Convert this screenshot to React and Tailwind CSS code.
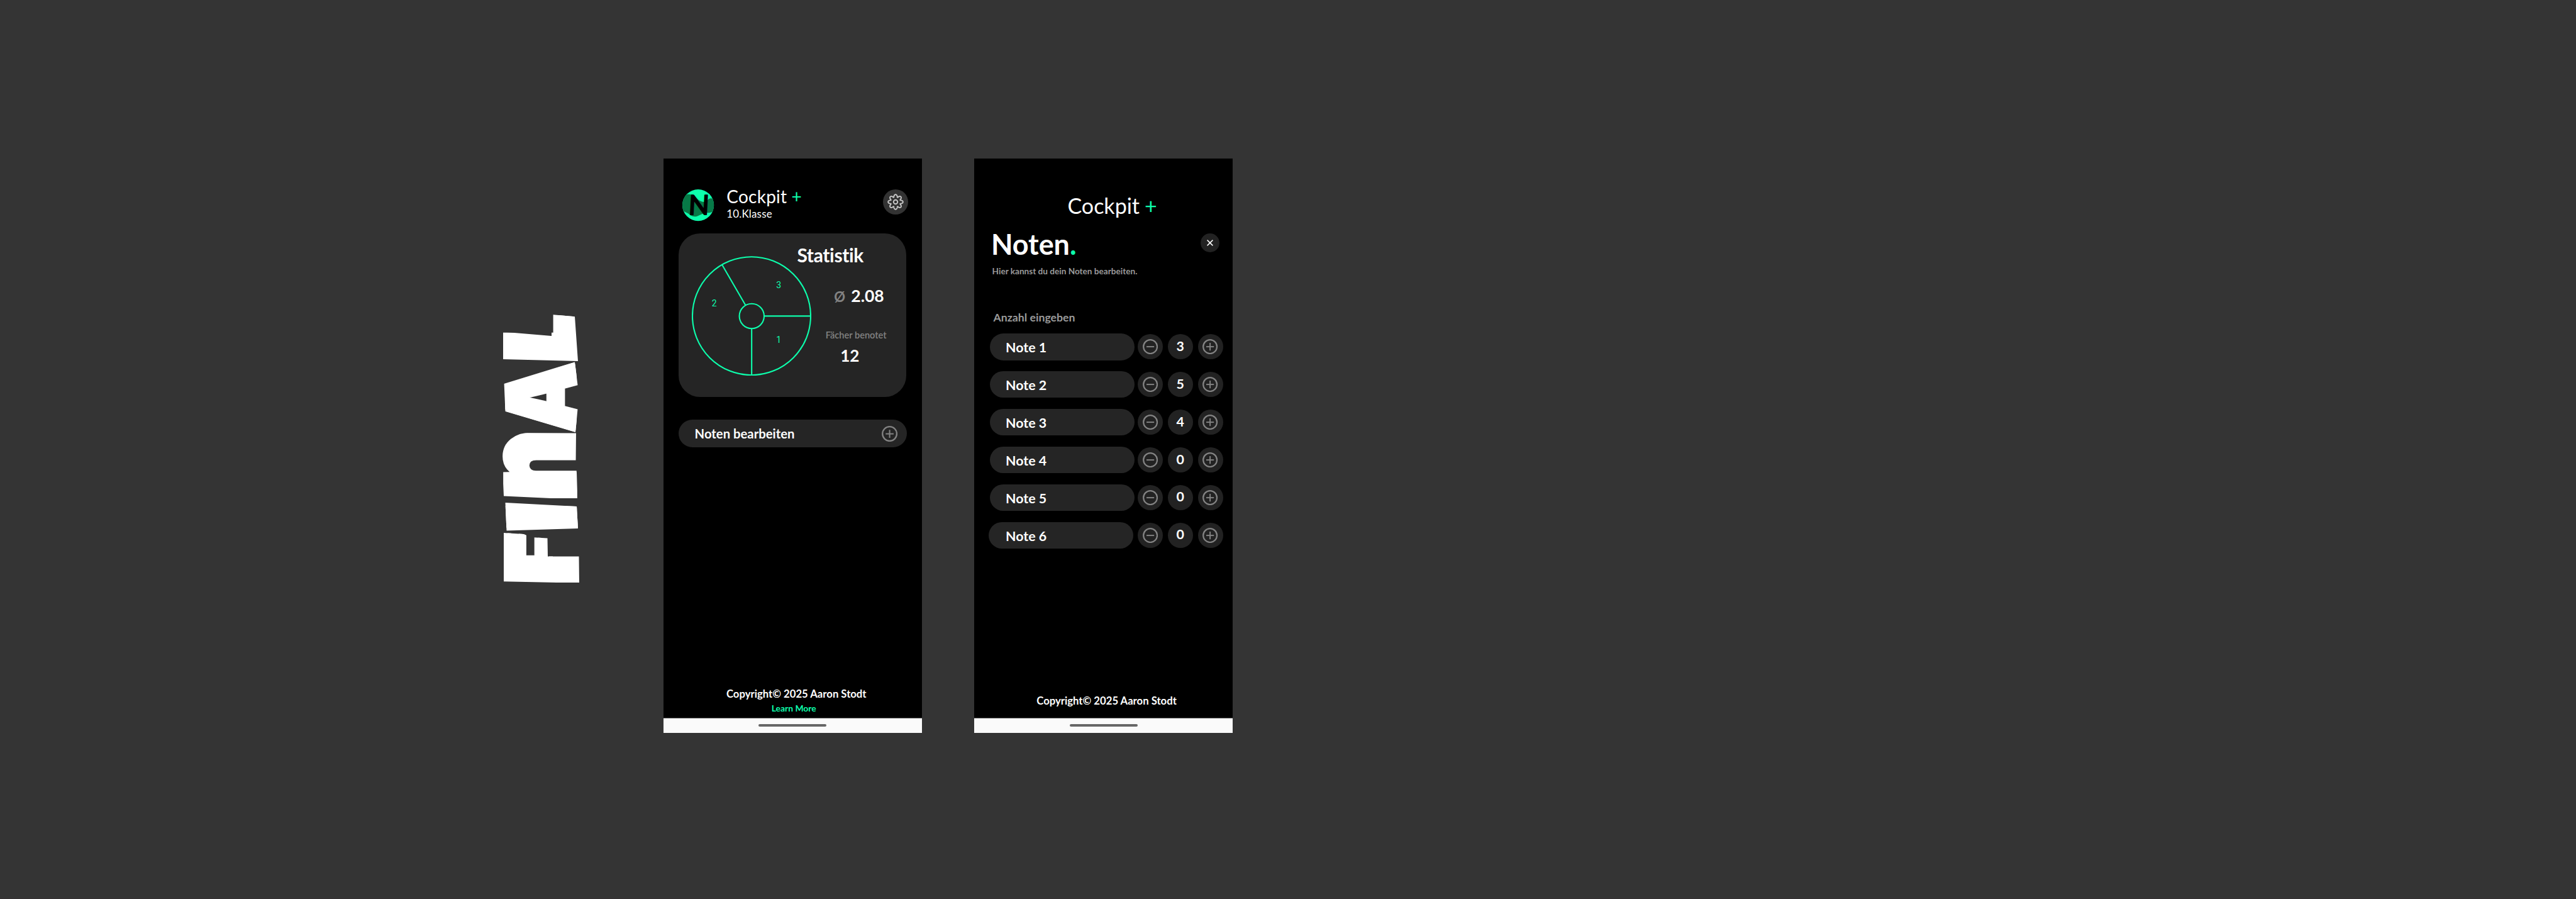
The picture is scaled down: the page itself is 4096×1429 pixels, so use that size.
import React from "react";

const GREEN = "#0dffac";

const GEAR_PATH =
  Array.from({ length: 192 }, (_, i) => {
    const t = (i / 192) * Math.PI * 2;
    const r = 51.5 + 10.5 * Math.cos(8 * t);
    const a = t + 0.055 * Math.sin(8 * t);
    return `${i ? "L" : "M"}${(137 + r * Math.cos(a)).toFixed(2)} ${(131 + r * Math.sin(a)).toFixed(2)}`;
  }).join("") + "Z";

function FinalLabel() {
  const glyph = "absolute left-0 top-0 block origin-top-left text-[100px] leading-none font-black";
  return (
    <div className="mt-[498.7px] flex h-[428px] w-[122px] shrink-0 items-center justify-center font-['Inter',sans-serif] text-white">
      <div className="flex h-[122px] w-[428px] shrink-0 -rotate-90">
        <div className="relative h-[122px] w-[80px] shrink-0 [clip-path:polygon(2.8px_1.5px,80px_1.5px,78px_34px,73px_45px,71.6px_71.5px,42.6px_72px,42.6px_121.5px,0.3px_122px)]">
          <span className={glyph + " [-webkit-text-stroke:8px_white] [transform:matrix(1.56,0,0,1.5,0,-12.5)]"}>F</span>
        </div>
        <div className="relative ml-[3px] h-[122px] w-[45px] shrink-0 [clip-path:polygon(0.6px_6.5px,45px_4.5px,39px_118px,4px_120px)]">
          <span className={glyph + " [-webkit-text-stroke:8px_white] [transform:matrix(1.75,0,0,1.6,-3,-18)]"}>I</span>
        </div>
        <div className="relative ml-[5px] h-[122px] w-[106px] shrink-0 [clip-path:polygon(5.6px_2px,45px_0px,106px_0px,105.5px_117px,57px_116.5px,42.5px_118px,0px_119.5px)]">
          <span className={glyph + " [-webkit-text-stroke:6px_white] [transform:matrix(1.715,0,0,1.943,-1.5,-54.5)]"}>n</span>
        </div>
        <div className="relative ml-[0.7px] h-[122px] w-[112px] shrink-0 [clip-path:polygon(33.3px_4.5px,79.8px_2.5px,112px_115px,71px_120px,42.3px_120px,0px_116px)]">
          <span className={glyph + " [-webkit-text-stroke:4px_white] [transform:matrix(1.43,0,0,1.57,-1,-17.5)]"}>A</span>
        </div>
        <div className="relative ml-[1.3px] h-[122px] w-[74px] shrink-0 [clip-path:polygon(3px_1px,46.5px_1px,40px_78px,74px_78px,70.7px_115px,0px_120px)]">
          <span className={glyph + " [-webkit-text-stroke:12px_white] [transform:matrix(1.42,0,0,1.43,2,-11)]"}>L</span>
        </div>
      </div>
    </div>
  );
}

function Avatar() {
  return (
    <svg className="h-[50.2px] w-[50.2px] shrink-0 overflow-visible" viewBox="36 25 262 262">
      <defs>
        <clipPath id="avatar-disc">
          <circle cx="167" cy="156" r="131" />
        </clipPath>
      </defs>
      <g clipPath="url(#avatar-disc)">
        <rect x="30" y="20" width="280" height="280" fill={GREEN} />
        <path
          d="M30 82C58 62 92 64 114 68C150 76 162 126 212 129C243 128 250 99 272 99C284 99 296 108 306 118V200C280 215 262 222 236 219C196 222 172 251 137 251C106 250 92 226 70 218C52 212 46 204 30 200Z"
          fill="#077947"
        />
      </g>
      <text
        x="0"
        y="0"
        transform="translate(84 235) skewX(-3)"
        fontFamily="Lato, sans-serif"
        fontSize="224"
        fontWeight="400"
        fill="#000"
        stroke="#000"
        strokeWidth="11"
        strokeLinejoin="round"
      >
        N
      </text>
    </svg>
  );
}

function GearButton() {
  return (
    <div className="mr-[22px] ml-auto h-10 w-10 shrink-0 rounded-full bg-[#333333]">
      <svg className="h-10 w-10" viewBox="32 26 210 210" fill="none" stroke="#c8c8c8" strokeWidth="10">
        <path d={GEAR_PATH} strokeLinejoin="round" />
        <circle cx="137" cy="131" r="17" />
      </svg>
    </div>
  );
}

function RingIcon({ plus, className }) {
  return (
    <svg className={className} viewBox="0 0 25 25" fill="none" stroke="#838383">
      <circle cx="12.5" cy="12.5" r="11.3" strokeWidth="2.3" />
      <path d="M6.2 12.5H18.8" strokeWidth="2" />
      {plus && <path d="M12.5 6.2V18.8" strokeWidth="2" />}
    </svg>
  );
}

function Pie() {
  return (
    <svg
      className="mt-[35.8px] ml-[21px] h-[190.4px] w-[190px] shrink-0 font-['Roboto',sans-serif]"
      viewBox="0 0 190 190.4"
      fill="none"
      stroke={GREEN}
      strokeWidth="2.1"
    >
      <circle cx="95" cy="95.2" r="94" />
      <circle cx="95.3" cy="95.5" r="19.7" />
      <path d="M115 95.4H189M95.2 115V189M47.8 13.2L85.5 78.2" />
      <g fill={GREEN} stroke="none" fontSize="14" textAnchor="middle">
        <text x="138.3" y="51.5">3</text>
        <text x="35.6" y="79.6">2</text>
        <text x="138.3" y="138.2">1</text>
      </g>
    </svg>
  );
}

function HomeBar() {
  return (
    <div className="mt-auto flex h-[24.5px] w-full shrink-0 items-center justify-center border-t border-[#6b6b6b] bg-[#fafafa]">
      <div className="h-1 w-[108px] rounded-full bg-[#666666]" />
    </div>
  );
}

function StatsScreen() {
  return (
    <div className="mt-[252px] ml-[133.7px] flex h-[913px] w-[411px] shrink-0 flex-col bg-black">
      <div className="mt-[49.3px] ml-[30px] flex h-[50px] shrink-0 items-start">
        <Avatar />
        <div className="mt-[-3.7px] ml-[20.1px] whitespace-nowrap">
          <div className="flex text-[28px] leading-none tracking-[0.25px]">
            <span>Cockpit</span>
            <span className="ml-[7px] text-[#0dffac]">+</span>
          </div>
          <div className="mt-[5.6px] text-[17px] leading-none tracking-[0.15px]">10.Klasse</div>
        </div>
        <GearButton />
      </div>

      <div className="mt-[19.7px] ml-6 flex h-[260px] w-[362px] shrink-0 items-start rounded-[34px] bg-[#252525]">
        <Pie />
        <div className="mt-[19.3px] ml-[-22.6px] font-bold whitespace-nowrap">
          <div className="text-[30px] leading-none tracking-[-0.35px] [font-variant-ligatures:none]">Statistik</div>
          <div className="mt-[36.5px] ml-[58.8px] flex items-baseline leading-none">
            <span className="text-[22px] leading-none text-[#828282]">Ø</span>
            <span className="ml-[9.3px] text-[26.5px] leading-none">2.08</span>
          </div>
          <div className="mt-[43.2px] ml-[45.3px] text-[14.6px] leading-none font-semibold text-[#828282]">Fächer benotet</div>
          <div className="mt-[10.7px] ml-[68.8px] text-[26px] leading-none">12</div>
        </div>
      </div>

      <div className="mt-[35.6px] ml-6 flex h-[44.2px] w-[363px] shrink-0 items-center justify-between rounded-full bg-[#252525] pt-px pr-[14.7px] pl-[25.6px]">
        <span className="text-[20.3px] leading-none font-bold">Noten bearbeiten</span>
        <RingIcon plus className="mt-px h-[25.2px] w-[25.2px]" />
      </div>

      <div className="mt-[384.4px] ml-[100px] text-[16.7px] leading-none font-bold whitespace-nowrap">
        Copyright© 2025 Aaron Stodt
      </div>
      <div className="mt-[7.2px] ml-[171.7px] text-[13.9px] leading-none font-bold text-[#0dffac]">Learn More</div>
      <HomeBar />
    </div>
  );
}

const GRADES = [3, 5, 4, 0, 0, 0];

function GradeRow({ grade, count }) {
  const disc = "flex h-10 w-10 shrink-0 items-center justify-center rounded-full bg-[#222222]";
  return (
    <div className="flex h-[42.6px] items-center">
      <div
        className={
          "flex h-full w-[229.5px] shrink-0 items-center rounded-full bg-[#252525] pt-[3.6px] text-[21.4px] leading-none font-bold " +
          (grade === 6 ? "mr-[7.1px] ml-[-1.9px] pl-[26.7px]" : "mr-[5.2px] pl-[24.8px]")
        }
      >
        Note {grade}
      </div>
      <div className={disc}>
        <RingIcon className="h-[24.2px] w-[24.2px]" />
      </div>
      <div className={disc + " ml-[7.8px] pb-[1.6px] text-[21.4px] leading-none font-bold"}>{count}</div>
      <div className={disc + " ml-[7.8px]"}>
        <RingIcon plus className="h-[24.2px] w-[24.2px]" />
      </div>
    </div>
  );
}

function GradesScreen() {
  return (
    <div className="mt-[252px] ml-[83.5px] flex h-[913px] w-[411px] shrink-0 flex-col bg-black">
      <div className="mt-[58px] ml-[148px] flex text-[34px] leading-none">
        <span>Cockpit</span>
        <span className="ml-[8px] text-[#0dffac]">+</span>
      </div>

      <div className="mt-[21.8px] ml-[26.4px] flex h-[44.7px] items-start">
        <h1 className="text-[44.9px] leading-none font-bold">
          Noten<span className="text-[#0dffac]">.</span>
        </h1>
        <div className="mt-[5.6px] mr-[21.8px] ml-auto flex h-[29.6px] w-[29.6px] items-center justify-center rounded-full bg-[#222222]">
          <svg className="h-[10px] w-[10px]" viewBox="0 0 10 10" fill="none" stroke="#fff" strokeWidth="1.5">
            <path d="M0.6 0.6L9.4 9.4M9.4 0.6L0.6 9.4" />
          </svg>
        </div>
      </div>

      <div className="mt-[14.6px] ml-[28.1px] text-[13.6px] leading-none font-bold whitespace-nowrap text-[#999999]">
        Hier kannst du dein Noten bearbeiten.
      </div>
      <div className="mt-[57px] ml-[30px] text-[17.7px] leading-none font-bold text-[#999999]">Anzahl eingeben</div>

      <div className="mt-[16.6px] ml-[24.8px] flex flex-col gap-[17.33px]">
        {GRADES.map((count, i) => (
          <GradeRow key={i} grade={i + 1} count={count} />
        ))}
      </div>

      <div className="mt-[233.6px] ml-[98.8px] text-[16.7px] leading-none font-bold whitespace-nowrap">
        Copyright© 2025 Aaron Stodt
      </div>
      <HomeBar />
    </div>
  );
}

export default function App() {
  return (
    <div className="flex h-[1429px] w-[4096px] items-start overflow-hidden border-b border-[#353133] bg-[#343434] pl-[799.3px] font-['Lato',sans-serif] text-white">
      <FinalLabel />
      <StatsScreen />
      <GradesScreen />
    </div>
  );
}
